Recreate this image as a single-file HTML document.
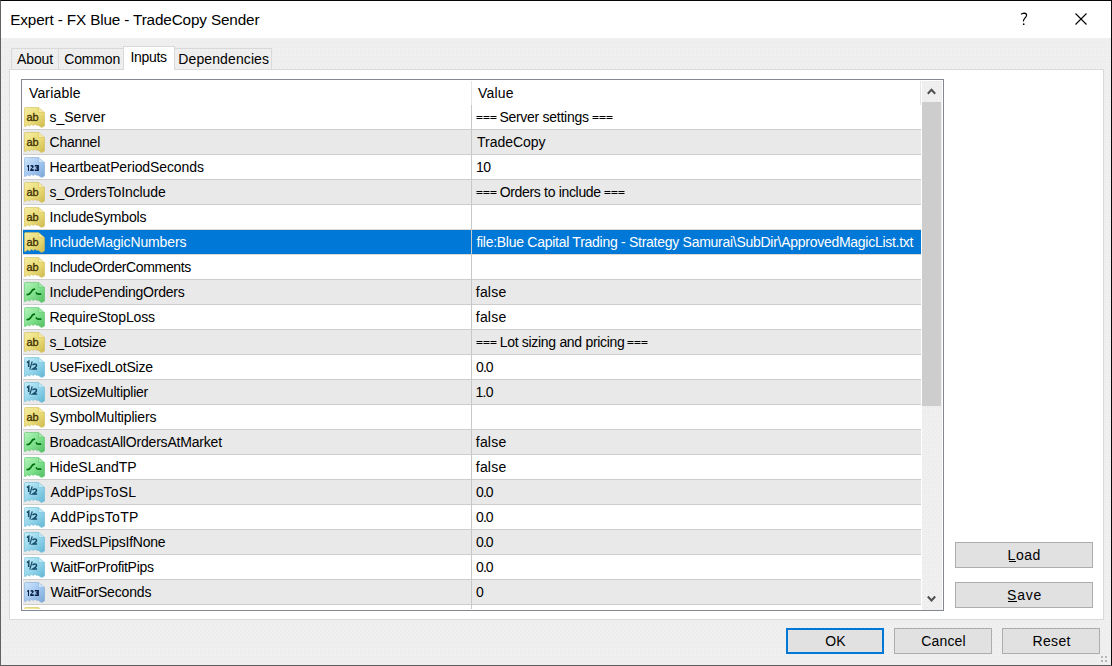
<!DOCTYPE html>
<html><head><meta charset="utf-8">
<style>
*{margin:0;padding:0;box-sizing:border-box}
html,body{width:1112px;height:666px;overflow:hidden;background:#f0f0f0;font-family:"Liberation Sans",sans-serif;color:#000}
div,svg{position:absolute}
.t{white-space:nowrap;line-height:16px}
.btn{background:#e1e1e1;border:1px solid #adadad}
</style></head><body>
<div style="left:0;top:0;width:1112px;height:666px;border-style:solid;border-width:1px;border-color:#050505 #0a0a0a #5c5c5c #626262"></div>
<svg style="left:0;top:0" width="1112" height="666"><defs><pattern id="dots" x="0" y="0" width="4" height="10" patternUnits="userSpaceOnUse"><rect x="0" y="1" width="1" height="1" fill="#e7e7e7"/><rect x="2" y="2" width="1" height="1" fill="#e7e7e7"/><rect x="0" y="4" width="1" height="1" fill="#e7e7e7"/><rect x="1" y="6" width="1" height="1" fill="#e7e7e7"/><rect x="3" y="7" width="1" height="1" fill="#e7e7e7"/><rect x="1" y="9" width="1" height="1" fill="#e7e7e7"/></pattern></defs><rect x="1" y="38" width="1110" height="627" fill="url(#dots)" shape-rendering="crispEdges"/></svg>
<div style="left:1px;top:1px;width:1110px;height:37px;background:#fff"></div>

<svg width="0" height="0" style="left:0;top:0"><defs><linearGradient id="gab" x1="0" y1="0" x2="1" y2="1"><stop offset="0" stop-color="#f5eca2"/><stop offset="0.55" stop-color="#ebdc76"/><stop offset="1" stop-color="#cdb94e"/></linearGradient><linearGradient id="gn" x1="0" y1="0" x2="1" y2="1"><stop offset="0" stop-color="#cfe4fb"/><stop offset="0.55" stop-color="#9fc5ef"/><stop offset="1" stop-color="#7aa6d6"/></linearGradient><linearGradient id="gb" x1="0" y1="0" x2="1" y2="1"><stop offset="0" stop-color="#b4f4bb"/><stop offset="0.55" stop-color="#7ddf8a"/><stop offset="1" stop-color="#52bd62"/></linearGradient><linearGradient id="gh" x1="0" y1="0" x2="1" y2="1"><stop offset="0" stop-color="#c6eef9"/><stop offset="0.55" stop-color="#8fd3ea"/><stop offset="1" stop-color="#62b5d2"/></linearGradient></defs></svg>
<div class="t" style="left:10.3px;top:12px;font-size:15.3px;letter-spacing:-0.147px">Expert - FX Blue - TradeCopy Sender</div>
<svg style="left:1019px;top:12px" width="10" height="15" viewBox="0 0 10 15"><path d="M2.1,2.4 Q3,1.1 5.2,1.1 Q7.6,1.2 7.6,3.2 Q7.5,4.8 5.7,6.3 Q4.4,7.5 4.4,9.5" fill="none" stroke="#000" stroke-width="1.15"/><circle cx="4.7" cy="12.2" r="0.85" fill="#000"/></svg>
<svg style="left:1075px;top:13px" width="12" height="12" viewBox="0 0 12 12"><path d="M0.5,0.5 L11.5,11.5 M11.5,0.5 L0.5,11.5" stroke="#000" stroke-width="1.1"/></svg>
<div style="left:9px;top:69px;width:1095px;height:551px;background:#fff;border:1px solid #d9d9d9"></div>
<div style="left:11px;top:48px;width:48px;height:21px;border:1px solid #d9d9d9;border-bottom:none"></div>
<div class="t" style="left:17px;top:51px;font-size:14px;letter-spacing:-0.1px">About</div>
<div style="left:58px;top:48px;width:66px;height:21px;border:1px solid #d9d9d9;border-bottom:none"></div>
<div class="t" style="left:64.2px;top:51px;font-size:14px;letter-spacing:-0.16px">Common</div>
<div style="left:123px;top:46px;width:52px;height:24px;background:#fff;border:1px solid #d9d9d9;border-bottom:none"></div>
<div class="t" style="left:130.6px;top:49px;font-size:14px;letter-spacing:-0.36px">Inputs</div>
<div style="left:174px;top:48px;width:98px;height:21px;border:1px solid #d9d9d9;border-bottom:none"></div>
<div class="t" style="left:178.3px;top:51px;font-size:14px;letter-spacing:0.108px">Dependencies</div>
<div style="left:21px;top:79px;width:923px;height:532px;border:1px solid #828790;background:#fff"></div>
<div class="t" style="left:28.9px;top:85px;font-size:14px;letter-spacing:0.199px">Variable</div>
<div class="t" style="left:477.9px;top:85px;font-size:14px;letter-spacing:0.2px">Value</div>
<div style="left:471px;top:81px;width:1px;height:24px;background:#e5e5e5"></div>
<div style="left:920px;top:81px;width:1px;height:24px;background:#e5e5e5"></div>
<div style="left:22px;top:80px;width:921px;height:529px;overflow:hidden">
<div style="left:1px;top:25px;width:898px;height:24px;background:#fff"></div>
<div style="left:1px;top:49px;width:898px;height:1px;background:#cdcdcd"></div>
<div style="left:449px;top:25px;width:1px;height:25px;background:#c8c8c8"></div>
<svg style="left:2px;top:27px" width="21" height="21" viewBox="0 0 21 21"><path d="M0.5,1.5 Q0.5,0.5 1.5,0.5 L14.5,0.5 L20.5,5.5 L20.5,19 L19,19.8 L17.5,20.6 L16,19.5 L14,18 L12.5,18.4 L11,16.9 L9.5,18.6 L7.5,17.3 L5.5,19 L3.5,17.7 L2,19.3 L0.5,19.4 Z" fill="url(#gab)" stroke="#cdb94e" stroke-width="1" stroke-opacity="0.55"/><path d="M14.5,0.8 L14.5,5.5 L20.2,5.5" fill="#f8f0b8" fill-opacity="0.7" stroke="#cdb94e" stroke-width="0.8" stroke-opacity="0.5"/><text x="2.6" y="13.9" font-family="Liberation Sans" font-size="11" fill="#3e3000" stroke="#3e3000" stroke-width="0.3" letter-spacing="-0.15">ab</text></svg>
<div style="left:1px;top:50px;width:898px;height:24px;background:#e9e9e9"></div>
<div style="left:1px;top:74px;width:898px;height:1px;background:#cdcdcd"></div>
<div style="left:449px;top:50px;width:1px;height:25px;background:#c8c8c8"></div>
<svg style="left:2px;top:52px" width="21" height="21" viewBox="0 0 21 21"><path d="M0.5,1.5 Q0.5,0.5 1.5,0.5 L14.5,0.5 L20.5,5.5 L20.5,19 L19,19.8 L17.5,20.6 L16,19.5 L14,18 L12.5,18.4 L11,16.9 L9.5,18.6 L7.5,17.3 L5.5,19 L3.5,17.7 L2,19.3 L0.5,19.4 Z" fill="url(#gab)" stroke="#cdb94e" stroke-width="1" stroke-opacity="0.55"/><path d="M14.5,0.8 L14.5,5.5 L20.2,5.5" fill="#f8f0b8" fill-opacity="0.7" stroke="#cdb94e" stroke-width="0.8" stroke-opacity="0.5"/><text x="2.6" y="13.9" font-family="Liberation Sans" font-size="11" fill="#3e3000" stroke="#3e3000" stroke-width="0.3" letter-spacing="-0.15">ab</text></svg>
<div style="left:1px;top:75px;width:898px;height:24px;background:#fff"></div>
<div style="left:1px;top:99px;width:898px;height:1px;background:#cdcdcd"></div>
<div style="left:449px;top:75px;width:1px;height:25px;background:#c8c8c8"></div>
<svg style="left:2px;top:77px" width="21" height="21" viewBox="0 0 21 21"><path d="M0.5,1.5 Q0.5,0.5 1.5,0.5 L14.5,0.5 L20.5,5.5 L20.5,19 L19,19.8 L17.5,20.6 L16,19.5 L14,18 L12.5,18.4 L11,16.9 L9.5,18.6 L7.5,17.3 L5.5,19 L3.5,17.7 L2,19.3 L0.5,19.4 Z" fill="url(#gn)" stroke="#7aa6d6" stroke-width="1" stroke-opacity="0.55"/><path d="M14.5,0.8 L14.5,5.5 L20.2,5.5" fill="#e2effc" fill-opacity="0.7" stroke="#7aa6d6" stroke-width="0.8" stroke-opacity="0.5"/><path d="M3,9 L4,8 L5,8 L5,14 L4,14 L4,9.5 L3,10 Z" fill="#0a1f45"/><path d="M6.3,8.8 Q7,8 8,8 Q9.7,8 9.7,9.6 Q9.7,10.6 8.5,11.3 L7.6,12.3 L9.8,12.3 L9.8,14 L6.2,14 L6.2,12.6 L8,10.6 Q8.3,10 8,9.6 Q7.6,9.4 7.1,10 Z" fill="#0a1f45"/><path d="M10.8,8 L14.9,8 L14.9,14 L10.8,14 L10.8,12.5 L13.2,12.5 L13.2,11.6 L11.8,11.6 L11.8,10.3 L13.2,10.3 L13.2,9.5 L10.8,9.5 Z" fill="#0a1f45"/></svg>
<div style="left:1px;top:100px;width:898px;height:24px;background:#e9e9e9"></div>
<div style="left:1px;top:124px;width:898px;height:1px;background:#cdcdcd"></div>
<div style="left:449px;top:100px;width:1px;height:25px;background:#c8c8c8"></div>
<svg style="left:2px;top:102px" width="21" height="21" viewBox="0 0 21 21"><path d="M0.5,1.5 Q0.5,0.5 1.5,0.5 L14.5,0.5 L20.5,5.5 L20.5,19 L19,19.8 L17.5,20.6 L16,19.5 L14,18 L12.5,18.4 L11,16.9 L9.5,18.6 L7.5,17.3 L5.5,19 L3.5,17.7 L2,19.3 L0.5,19.4 Z" fill="url(#gab)" stroke="#cdb94e" stroke-width="1" stroke-opacity="0.55"/><path d="M14.5,0.8 L14.5,5.5 L20.2,5.5" fill="#f8f0b8" fill-opacity="0.7" stroke="#cdb94e" stroke-width="0.8" stroke-opacity="0.5"/><text x="2.6" y="13.9" font-family="Liberation Sans" font-size="11" fill="#3e3000" stroke="#3e3000" stroke-width="0.3" letter-spacing="-0.15">ab</text></svg>
<div style="left:1px;top:125px;width:898px;height:24px;background:#fff"></div>
<div style="left:1px;top:149px;width:898px;height:1px;background:#e0d9d2"></div>
<div style="left:449px;top:125px;width:1px;height:25px;background:#c8c8c8"></div>
<svg style="left:2px;top:127px" width="21" height="21" viewBox="0 0 21 21"><path d="M0.5,1.5 Q0.5,0.5 1.5,0.5 L14.5,0.5 L20.5,5.5 L20.5,19 L19,19.8 L17.5,20.6 L16,19.5 L14,18 L12.5,18.4 L11,16.9 L9.5,18.6 L7.5,17.3 L5.5,19 L3.5,17.7 L2,19.3 L0.5,19.4 Z" fill="url(#gab)" stroke="#cdb94e" stroke-width="1" stroke-opacity="0.55"/><path d="M14.5,0.8 L14.5,5.5 L20.2,5.5" fill="#f8f0b8" fill-opacity="0.7" stroke="#cdb94e" stroke-width="0.8" stroke-opacity="0.5"/><text x="2.6" y="13.9" font-family="Liberation Sans" font-size="11" fill="#3e3000" stroke="#3e3000" stroke-width="0.3" letter-spacing="-0.15">ab</text></svg>
<div style="left:1px;top:150px;width:898px;height:24px;background:#0078d7"></div>
<div style="left:1px;top:174px;width:898px;height:1px;background:#e0d9d2"></div>
<div style="left:449px;top:150px;width:1px;height:25px;background:#c8c8c8"></div>
<svg style="left:2px;top:152px" width="21" height="21" viewBox="0 0 21 21"><path d="M0.5,1.5 Q0.5,0.5 1.5,0.5 L14.5,0.5 L20.5,5.5 L20.5,19 L19,19.8 L17.5,20.6 L16,19.5 L14,18 L12.5,18.4 L11,16.9 L9.5,18.6 L7.5,17.3 L5.5,19 L3.5,17.7 L2,19.3 L0.5,19.4 Z" fill="url(#gab)" stroke="#cdb94e" stroke-width="1" stroke-opacity="0.55"/><path d="M14.5,0.8 L14.5,5.5 L20.2,5.5" fill="#f8f0b8" fill-opacity="0.7" stroke="#cdb94e" stroke-width="0.8" stroke-opacity="0.5"/><text x="2.6" y="13.9" font-family="Liberation Sans" font-size="11" fill="#3e3000" stroke="#3e3000" stroke-width="0.3" letter-spacing="-0.15">ab</text></svg>
<div style="left:1px;top:175px;width:898px;height:24px;background:#fff"></div>
<div style="left:1px;top:199px;width:898px;height:1px;background:#cdcdcd"></div>
<div style="left:449px;top:175px;width:1px;height:25px;background:#c8c8c8"></div>
<svg style="left:2px;top:177px" width="21" height="21" viewBox="0 0 21 21"><path d="M0.5,1.5 Q0.5,0.5 1.5,0.5 L14.5,0.5 L20.5,5.5 L20.5,19 L19,19.8 L17.5,20.6 L16,19.5 L14,18 L12.5,18.4 L11,16.9 L9.5,18.6 L7.5,17.3 L5.5,19 L3.5,17.7 L2,19.3 L0.5,19.4 Z" fill="url(#gab)" stroke="#cdb94e" stroke-width="1" stroke-opacity="0.55"/><path d="M14.5,0.8 L14.5,5.5 L20.2,5.5" fill="#f8f0b8" fill-opacity="0.7" stroke="#cdb94e" stroke-width="0.8" stroke-opacity="0.5"/><text x="2.6" y="13.9" font-family="Liberation Sans" font-size="11" fill="#3e3000" stroke="#3e3000" stroke-width="0.3" letter-spacing="-0.15">ab</text></svg>
<div style="left:1px;top:200px;width:898px;height:24px;background:#e9e9e9"></div>
<div style="left:1px;top:224px;width:898px;height:1px;background:#cdcdcd"></div>
<div style="left:449px;top:200px;width:1px;height:25px;background:#c8c8c8"></div>
<svg style="left:2px;top:202px" width="21" height="21" viewBox="0 0 21 21"><path d="M0.5,1.5 Q0.5,0.5 1.5,0.5 L14.5,0.5 L20.5,5.5 L20.5,19 L19,19.8 L17.5,20.6 L16,19.5 L14,18 L12.5,18.4 L11,16.9 L9.5,18.6 L7.5,17.3 L5.5,19 L3.5,17.7 L2,19.3 L0.5,19.4 Z" fill="url(#gb)" stroke="#52bd62" stroke-width="1" stroke-opacity="0.55"/><path d="M14.5,0.8 L14.5,5.5 L20.2,5.5" fill="#a8eab0" fill-opacity="0.7" stroke="#52bd62" stroke-width="0.8" stroke-opacity="0.5"/><path d="M3.2,12.6 Q5.5,12.6 7,10.2 Q8.6,7.2 10.4,7.2" fill="none" stroke="#007010" stroke-width="1.7" stroke-linecap="round"/><path d="M12.3,10.9 Q13,12.2 14.2,12.2 L16.6,12.2" fill="none" stroke="#007010" stroke-width="1.7" stroke-linecap="round"/></svg>
<div style="left:1px;top:225px;width:898px;height:24px;background:#fff"></div>
<div style="left:1px;top:249px;width:898px;height:1px;background:#cdcdcd"></div>
<div style="left:449px;top:225px;width:1px;height:25px;background:#c8c8c8"></div>
<svg style="left:2px;top:227px" width="21" height="21" viewBox="0 0 21 21"><path d="M0.5,1.5 Q0.5,0.5 1.5,0.5 L14.5,0.5 L20.5,5.5 L20.5,19 L19,19.8 L17.5,20.6 L16,19.5 L14,18 L12.5,18.4 L11,16.9 L9.5,18.6 L7.5,17.3 L5.5,19 L3.5,17.7 L2,19.3 L0.5,19.4 Z" fill="url(#gb)" stroke="#52bd62" stroke-width="1" stroke-opacity="0.55"/><path d="M14.5,0.8 L14.5,5.5 L20.2,5.5" fill="#a8eab0" fill-opacity="0.7" stroke="#52bd62" stroke-width="0.8" stroke-opacity="0.5"/><path d="M3.2,12.6 Q5.5,12.6 7,10.2 Q8.6,7.2 10.4,7.2" fill="none" stroke="#007010" stroke-width="1.7" stroke-linecap="round"/><path d="M12.3,10.9 Q13,12.2 14.2,12.2 L16.6,12.2" fill="none" stroke="#007010" stroke-width="1.7" stroke-linecap="round"/></svg>
<div style="left:1px;top:250px;width:898px;height:24px;background:#e9e9e9"></div>
<div style="left:1px;top:274px;width:898px;height:1px;background:#cdcdcd"></div>
<div style="left:449px;top:250px;width:1px;height:25px;background:#c8c8c8"></div>
<svg style="left:2px;top:252px" width="21" height="21" viewBox="0 0 21 21"><path d="M0.5,1.5 Q0.5,0.5 1.5,0.5 L14.5,0.5 L20.5,5.5 L20.5,19 L19,19.8 L17.5,20.6 L16,19.5 L14,18 L12.5,18.4 L11,16.9 L9.5,18.6 L7.5,17.3 L5.5,19 L3.5,17.7 L2,19.3 L0.5,19.4 Z" fill="url(#gab)" stroke="#cdb94e" stroke-width="1" stroke-opacity="0.55"/><path d="M14.5,0.8 L14.5,5.5 L20.2,5.5" fill="#f8f0b8" fill-opacity="0.7" stroke="#cdb94e" stroke-width="0.8" stroke-opacity="0.5"/><text x="2.6" y="13.9" font-family="Liberation Sans" font-size="11" fill="#3e3000" stroke="#3e3000" stroke-width="0.3" letter-spacing="-0.15">ab</text></svg>
<div style="left:1px;top:275px;width:898px;height:24px;background:#fff"></div>
<div style="left:1px;top:299px;width:898px;height:1px;background:#cdcdcd"></div>
<div style="left:449px;top:275px;width:1px;height:25px;background:#c8c8c8"></div>
<svg style="left:2px;top:277px" width="21" height="21" viewBox="0 0 21 21"><path d="M0.5,1.5 Q0.5,0.5 1.5,0.5 L14.5,0.5 L20.5,5.5 L20.5,19 L19,19.8 L17.5,20.6 L16,19.5 L14,18 L12.5,18.4 L11,16.9 L9.5,18.6 L7.5,17.3 L5.5,19 L3.5,17.7 L2,19.3 L0.5,19.4 Z" fill="url(#gh)" stroke="#62b5d2" stroke-width="1" stroke-opacity="0.55"/><path d="M14.5,0.8 L14.5,5.5 L20.2,5.5" fill="#d2f1fa" fill-opacity="0.7" stroke="#62b5d2" stroke-width="0.8" stroke-opacity="0.5"/><path d="M2.9,5.6 L4.7,4.3 L4.7,10" fill="none" stroke="#174a68" stroke-width="1.6"/><path d="M8.2,4.3 L5.8,12.4" fill="none" stroke="#174a68" stroke-width="1.2"/><path d="M8.6,8.2 Q9,6.9 10.7,6.9 Q12.6,6.9 12.5,8.6 Q12.4,9.7 10.6,10.8 L8.9,11.9 L13.1,11.9" fill="none" stroke="#174a68" stroke-width="1.5"/></svg>
<div style="left:1px;top:300px;width:898px;height:24px;background:#e9e9e9"></div>
<div style="left:1px;top:324px;width:898px;height:1px;background:#cdcdcd"></div>
<div style="left:449px;top:300px;width:1px;height:25px;background:#c8c8c8"></div>
<svg style="left:2px;top:302px" width="21" height="21" viewBox="0 0 21 21"><path d="M0.5,1.5 Q0.5,0.5 1.5,0.5 L14.5,0.5 L20.5,5.5 L20.5,19 L19,19.8 L17.5,20.6 L16,19.5 L14,18 L12.5,18.4 L11,16.9 L9.5,18.6 L7.5,17.3 L5.5,19 L3.5,17.7 L2,19.3 L0.5,19.4 Z" fill="url(#gh)" stroke="#62b5d2" stroke-width="1" stroke-opacity="0.55"/><path d="M14.5,0.8 L14.5,5.5 L20.2,5.5" fill="#d2f1fa" fill-opacity="0.7" stroke="#62b5d2" stroke-width="0.8" stroke-opacity="0.5"/><path d="M2.9,5.6 L4.7,4.3 L4.7,10" fill="none" stroke="#174a68" stroke-width="1.6"/><path d="M8.2,4.3 L5.8,12.4" fill="none" stroke="#174a68" stroke-width="1.2"/><path d="M8.6,8.2 Q9,6.9 10.7,6.9 Q12.6,6.9 12.5,8.6 Q12.4,9.7 10.6,10.8 L8.9,11.9 L13.1,11.9" fill="none" stroke="#174a68" stroke-width="1.5"/></svg>
<div style="left:1px;top:325px;width:898px;height:24px;background:#fff"></div>
<div style="left:1px;top:349px;width:898px;height:1px;background:#cdcdcd"></div>
<div style="left:449px;top:325px;width:1px;height:25px;background:#c8c8c8"></div>
<svg style="left:2px;top:327px" width="21" height="21" viewBox="0 0 21 21"><path d="M0.5,1.5 Q0.5,0.5 1.5,0.5 L14.5,0.5 L20.5,5.5 L20.5,19 L19,19.8 L17.5,20.6 L16,19.5 L14,18 L12.5,18.4 L11,16.9 L9.5,18.6 L7.5,17.3 L5.5,19 L3.5,17.7 L2,19.3 L0.5,19.4 Z" fill="url(#gab)" stroke="#cdb94e" stroke-width="1" stroke-opacity="0.55"/><path d="M14.5,0.8 L14.5,5.5 L20.2,5.5" fill="#f8f0b8" fill-opacity="0.7" stroke="#cdb94e" stroke-width="0.8" stroke-opacity="0.5"/><text x="2.6" y="13.9" font-family="Liberation Sans" font-size="11" fill="#3e3000" stroke="#3e3000" stroke-width="0.3" letter-spacing="-0.15">ab</text></svg>
<div style="left:1px;top:350px;width:898px;height:24px;background:#e9e9e9"></div>
<div style="left:1px;top:374px;width:898px;height:1px;background:#cdcdcd"></div>
<div style="left:449px;top:350px;width:1px;height:25px;background:#c8c8c8"></div>
<svg style="left:2px;top:352px" width="21" height="21" viewBox="0 0 21 21"><path d="M0.5,1.5 Q0.5,0.5 1.5,0.5 L14.5,0.5 L20.5,5.5 L20.5,19 L19,19.8 L17.5,20.6 L16,19.5 L14,18 L12.5,18.4 L11,16.9 L9.5,18.6 L7.5,17.3 L5.5,19 L3.5,17.7 L2,19.3 L0.5,19.4 Z" fill="url(#gb)" stroke="#52bd62" stroke-width="1" stroke-opacity="0.55"/><path d="M14.5,0.8 L14.5,5.5 L20.2,5.5" fill="#a8eab0" fill-opacity="0.7" stroke="#52bd62" stroke-width="0.8" stroke-opacity="0.5"/><path d="M3.2,12.6 Q5.5,12.6 7,10.2 Q8.6,7.2 10.4,7.2" fill="none" stroke="#007010" stroke-width="1.7" stroke-linecap="round"/><path d="M12.3,10.9 Q13,12.2 14.2,12.2 L16.6,12.2" fill="none" stroke="#007010" stroke-width="1.7" stroke-linecap="round"/></svg>
<div style="left:1px;top:375px;width:898px;height:24px;background:#fff"></div>
<div style="left:1px;top:399px;width:898px;height:1px;background:#cdcdcd"></div>
<div style="left:449px;top:375px;width:1px;height:25px;background:#c8c8c8"></div>
<svg style="left:2px;top:377px" width="21" height="21" viewBox="0 0 21 21"><path d="M0.5,1.5 Q0.5,0.5 1.5,0.5 L14.5,0.5 L20.5,5.5 L20.5,19 L19,19.8 L17.5,20.6 L16,19.5 L14,18 L12.5,18.4 L11,16.9 L9.5,18.6 L7.5,17.3 L5.5,19 L3.5,17.7 L2,19.3 L0.5,19.4 Z" fill="url(#gb)" stroke="#52bd62" stroke-width="1" stroke-opacity="0.55"/><path d="M14.5,0.8 L14.5,5.5 L20.2,5.5" fill="#a8eab0" fill-opacity="0.7" stroke="#52bd62" stroke-width="0.8" stroke-opacity="0.5"/><path d="M3.2,12.6 Q5.5,12.6 7,10.2 Q8.6,7.2 10.4,7.2" fill="none" stroke="#007010" stroke-width="1.7" stroke-linecap="round"/><path d="M12.3,10.9 Q13,12.2 14.2,12.2 L16.6,12.2" fill="none" stroke="#007010" stroke-width="1.7" stroke-linecap="round"/></svg>
<div style="left:1px;top:400px;width:898px;height:24px;background:#e9e9e9"></div>
<div style="left:1px;top:424px;width:898px;height:1px;background:#cdcdcd"></div>
<div style="left:449px;top:400px;width:1px;height:25px;background:#c8c8c8"></div>
<svg style="left:2px;top:402px" width="21" height="21" viewBox="0 0 21 21"><path d="M0.5,1.5 Q0.5,0.5 1.5,0.5 L14.5,0.5 L20.5,5.5 L20.5,19 L19,19.8 L17.5,20.6 L16,19.5 L14,18 L12.5,18.4 L11,16.9 L9.5,18.6 L7.5,17.3 L5.5,19 L3.5,17.7 L2,19.3 L0.5,19.4 Z" fill="url(#gh)" stroke="#62b5d2" stroke-width="1" stroke-opacity="0.55"/><path d="M14.5,0.8 L14.5,5.5 L20.2,5.5" fill="#d2f1fa" fill-opacity="0.7" stroke="#62b5d2" stroke-width="0.8" stroke-opacity="0.5"/><path d="M2.9,5.6 L4.7,4.3 L4.7,10" fill="none" stroke="#174a68" stroke-width="1.6"/><path d="M8.2,4.3 L5.8,12.4" fill="none" stroke="#174a68" stroke-width="1.2"/><path d="M8.6,8.2 Q9,6.9 10.7,6.9 Q12.6,6.9 12.5,8.6 Q12.4,9.7 10.6,10.8 L8.9,11.9 L13.1,11.9" fill="none" stroke="#174a68" stroke-width="1.5"/></svg>
<div style="left:1px;top:425px;width:898px;height:24px;background:#fff"></div>
<div style="left:1px;top:449px;width:898px;height:1px;background:#cdcdcd"></div>
<div style="left:449px;top:425px;width:1px;height:25px;background:#c8c8c8"></div>
<svg style="left:2px;top:427px" width="21" height="21" viewBox="0 0 21 21"><path d="M0.5,1.5 Q0.5,0.5 1.5,0.5 L14.5,0.5 L20.5,5.5 L20.5,19 L19,19.8 L17.5,20.6 L16,19.5 L14,18 L12.5,18.4 L11,16.9 L9.5,18.6 L7.5,17.3 L5.5,19 L3.5,17.7 L2,19.3 L0.5,19.4 Z" fill="url(#gh)" stroke="#62b5d2" stroke-width="1" stroke-opacity="0.55"/><path d="M14.5,0.8 L14.5,5.5 L20.2,5.5" fill="#d2f1fa" fill-opacity="0.7" stroke="#62b5d2" stroke-width="0.8" stroke-opacity="0.5"/><path d="M2.9,5.6 L4.7,4.3 L4.7,10" fill="none" stroke="#174a68" stroke-width="1.6"/><path d="M8.2,4.3 L5.8,12.4" fill="none" stroke="#174a68" stroke-width="1.2"/><path d="M8.6,8.2 Q9,6.9 10.7,6.9 Q12.6,6.9 12.5,8.6 Q12.4,9.7 10.6,10.8 L8.9,11.9 L13.1,11.9" fill="none" stroke="#174a68" stroke-width="1.5"/></svg>
<div style="left:1px;top:450px;width:898px;height:24px;background:#e9e9e9"></div>
<div style="left:1px;top:474px;width:898px;height:1px;background:#cdcdcd"></div>
<div style="left:449px;top:450px;width:1px;height:25px;background:#c8c8c8"></div>
<svg style="left:2px;top:452px" width="21" height="21" viewBox="0 0 21 21"><path d="M0.5,1.5 Q0.5,0.5 1.5,0.5 L14.5,0.5 L20.5,5.5 L20.5,19 L19,19.8 L17.5,20.6 L16,19.5 L14,18 L12.5,18.4 L11,16.9 L9.5,18.6 L7.5,17.3 L5.5,19 L3.5,17.7 L2,19.3 L0.5,19.4 Z" fill="url(#gh)" stroke="#62b5d2" stroke-width="1" stroke-opacity="0.55"/><path d="M14.5,0.8 L14.5,5.5 L20.2,5.5" fill="#d2f1fa" fill-opacity="0.7" stroke="#62b5d2" stroke-width="0.8" stroke-opacity="0.5"/><path d="M2.9,5.6 L4.7,4.3 L4.7,10" fill="none" stroke="#174a68" stroke-width="1.6"/><path d="M8.2,4.3 L5.8,12.4" fill="none" stroke="#174a68" stroke-width="1.2"/><path d="M8.6,8.2 Q9,6.9 10.7,6.9 Q12.6,6.9 12.5,8.6 Q12.4,9.7 10.6,10.8 L8.9,11.9 L13.1,11.9" fill="none" stroke="#174a68" stroke-width="1.5"/></svg>
<div style="left:1px;top:475px;width:898px;height:24px;background:#fff"></div>
<div style="left:1px;top:499px;width:898px;height:1px;background:#cdcdcd"></div>
<div style="left:449px;top:475px;width:1px;height:25px;background:#c8c8c8"></div>
<svg style="left:2px;top:477px" width="21" height="21" viewBox="0 0 21 21"><path d="M0.5,1.5 Q0.5,0.5 1.5,0.5 L14.5,0.5 L20.5,5.5 L20.5,19 L19,19.8 L17.5,20.6 L16,19.5 L14,18 L12.5,18.4 L11,16.9 L9.5,18.6 L7.5,17.3 L5.5,19 L3.5,17.7 L2,19.3 L0.5,19.4 Z" fill="url(#gh)" stroke="#62b5d2" stroke-width="1" stroke-opacity="0.55"/><path d="M14.5,0.8 L14.5,5.5 L20.2,5.5" fill="#d2f1fa" fill-opacity="0.7" stroke="#62b5d2" stroke-width="0.8" stroke-opacity="0.5"/><path d="M2.9,5.6 L4.7,4.3 L4.7,10" fill="none" stroke="#174a68" stroke-width="1.6"/><path d="M8.2,4.3 L5.8,12.4" fill="none" stroke="#174a68" stroke-width="1.2"/><path d="M8.6,8.2 Q9,6.9 10.7,6.9 Q12.6,6.9 12.5,8.6 Q12.4,9.7 10.6,10.8 L8.9,11.9 L13.1,11.9" fill="none" stroke="#174a68" stroke-width="1.5"/></svg>
<div style="left:1px;top:500px;width:898px;height:24px;background:#e9e9e9"></div>
<div style="left:1px;top:524px;width:898px;height:1px;background:#cdcdcd"></div>
<div style="left:449px;top:500px;width:1px;height:25px;background:#c8c8c8"></div>
<svg style="left:2px;top:502px" width="21" height="21" viewBox="0 0 21 21"><path d="M0.5,1.5 Q0.5,0.5 1.5,0.5 L14.5,0.5 L20.5,5.5 L20.5,19 L19,19.8 L17.5,20.6 L16,19.5 L14,18 L12.5,18.4 L11,16.9 L9.5,18.6 L7.5,17.3 L5.5,19 L3.5,17.7 L2,19.3 L0.5,19.4 Z" fill="url(#gn)" stroke="#7aa6d6" stroke-width="1" stroke-opacity="0.55"/><path d="M14.5,0.8 L14.5,5.5 L20.2,5.5" fill="#e2effc" fill-opacity="0.7" stroke="#7aa6d6" stroke-width="0.8" stroke-opacity="0.5"/><path d="M3,9 L4,8 L5,8 L5,14 L4,14 L4,9.5 L3,10 Z" fill="#0a1f45"/><path d="M6.3,8.8 Q7,8 8,8 Q9.7,8 9.7,9.6 Q9.7,10.6 8.5,11.3 L7.6,12.3 L9.8,12.3 L9.8,14 L6.2,14 L6.2,12.6 L8,10.6 Q8.3,10 8,9.6 Q7.6,9.4 7.1,10 Z" fill="#0a1f45"/><path d="M10.8,8 L14.9,8 L14.9,14 L10.8,14 L10.8,12.5 L13.2,12.5 L13.2,11.6 L11.8,11.6 L11.8,10.3 L13.2,10.3 L13.2,9.5 L10.8,9.5 Z" fill="#0a1f45"/></svg>
<div style="left:1px;top:525px;width:898px;height:24px;background:#fff"></div>
<div style="left:1px;top:549px;width:898px;height:1px;background:#cdcdcd"></div>
<div style="left:449px;top:525px;width:1px;height:25px;background:#c8c8c8"></div>
<svg style="left:2px;top:527px" width="21" height="21" viewBox="0 0 21 21"><path d="M0.5,1.5 Q0.5,0.5 1.5,0.5 L14.5,0.5 L20.5,5.5 L20.5,19 L19,19.8 L17.5,20.6 L16,19.5 L14,18 L12.5,18.4 L11,16.9 L9.5,18.6 L7.5,17.3 L5.5,19 L3.5,17.7 L2,19.3 L0.5,19.4 Z" fill="url(#gab)" stroke="#cdb94e" stroke-width="1" stroke-opacity="0.55"/><path d="M14.5,0.8 L14.5,5.5 L20.2,5.5" fill="#f8f0b8" fill-opacity="0.7" stroke="#cdb94e" stroke-width="0.8" stroke-opacity="0.5"/><text x="2.6" y="13.9" font-family="Liberation Sans" font-size="11" fill="#3e3000" stroke="#3e3000" stroke-width="0.3" letter-spacing="-0.15">ab</text></svg>
</div>
<div class="t" style="left:49.5px;top:109px;font-size:14px;letter-spacing:0.0px">s_Server</div>
<div class="t" style="left:499.4px;top:109px;font-size:14px;letter-spacing:-0.27px">Server settings</div>
<svg style="left:0;top:0" width="1112" height="666"><path d="M476.5,116.5 h6 M476.5,118.5 h6 M483.5,116.5 h6 M483.5,118.5 h6 M490.5,116.5 h6 M490.5,118.5 h6 M592.5,116.5 h6 M592.5,118.5 h6 M599.5,116.5 h6 M599.5,118.5 h6 M606.5,116.5 h6 M606.5,118.5 h6 " stroke="#000" stroke-width="1"/></svg>
<div class="t" style="left:49.5px;top:134px;font-size:14px;letter-spacing:-0.232px">Channel</div>
<div class="t" style="left:477.1px;top:134px;font-size:14px;letter-spacing:-0.028px">TradeCopy</div>
<div class="t" style="left:49.5px;top:159px;font-size:14px;letter-spacing:-0.095px">HeartbeatPeriodSeconds</div>
<div class="t" style="left:476px;top:159px;font-size:14px;letter-spacing:-0.6px">10</div>
<div class="t" style="left:49.5px;top:184px;font-size:14px;letter-spacing:-0.073px">s_OrdersToInclude</div>
<div class="t" style="left:499.7px;top:184px;font-size:14px;letter-spacing:-0.325px">Orders to include</div>
<svg style="left:0;top:0" width="1112" height="666"><path d="M476.5,191.5 h6 M476.5,193.5 h6 M483.5,191.5 h6 M483.5,193.5 h6 M490.5,191.5 h6 M490.5,193.5 h6 M604.5,191.5 h6 M604.5,193.5 h6 M611.5,191.5 h6 M611.5,193.5 h6 M618.5,191.5 h6 M618.5,193.5 h6 " stroke="#000" stroke-width="1"/></svg>
<div class="t" style="left:49.5px;top:209px;font-size:14px;letter-spacing:-0.138px">IncludeSymbols</div>
<div class="t" style="left:49.5px;top:234px;font-size:14px;letter-spacing:-0.131px;color:#fff">IncludeMagicNumbers</div>
<div class="t" style="left:476.4px;top:234px;font-size:14px;letter-spacing:-0.274px;color:#fff">file:Blue Capital Trading - Strategy Samurai\SubDir\ApprovedMagicList.txt</div>
<div class="t" style="left:49.5px;top:259px;font-size:14px;letter-spacing:-0.359px">IncludeOrderComments</div>
<div class="t" style="left:49.5px;top:284px;font-size:14px;letter-spacing:-0.211px">IncludePendingOrders</div>
<div class="t" style="left:475.8px;top:284px;font-size:14px;letter-spacing:0.2px">false</div>
<div class="t" style="left:49.5px;top:309px;font-size:14px;letter-spacing:-0.127px">RequireStopLoss</div>
<div class="t" style="left:475.8px;top:309px;font-size:14px;letter-spacing:0.2px">false</div>
<div class="t" style="left:49.5px;top:334px;font-size:14px;letter-spacing:-0.275px">s_Lotsize</div>
<div class="t" style="left:499.7px;top:334px;font-size:14px;letter-spacing:-0.304px">Lot sizing and pricing</div>
<svg style="left:0;top:0" width="1112" height="666"><path d="M476.5,341.5 h6 M476.5,343.5 h6 M483.5,341.5 h6 M483.5,343.5 h6 M490.5,341.5 h6 M490.5,343.5 h6 M627.5,341.5 h6 M627.5,343.5 h6 M634.5,341.5 h6 M634.5,343.5 h6 M641.5,341.5 h6 M641.5,343.5 h6 " stroke="#000" stroke-width="1"/></svg>
<div class="t" style="left:49.5px;top:359px;font-size:14px;letter-spacing:-0.156px">UseFixedLotSize</div>
<div class="t" style="left:476.1px;top:359px;font-size:14px;letter-spacing:-1.0px">0.0</div>
<div class="t" style="left:49.5px;top:384px;font-size:14px;letter-spacing:-0.25px">LotSizeMultiplier</div>
<div class="t" style="left:475.5px;top:384px;font-size:14px;letter-spacing:-0.7px">1.0</div>
<div class="t" style="left:49.5px;top:409px;font-size:14px;letter-spacing:-0.176px">SymbolMultipliers</div>
<div class="t" style="left:49.5px;top:434px;font-size:14px;letter-spacing:-0.192px">BroadcastAllOrdersAtMarket</div>
<div class="t" style="left:475.8px;top:434px;font-size:14px;letter-spacing:0.2px">false</div>
<div class="t" style="left:49.5px;top:459px;font-size:14px;letter-spacing:0.0px">HideSLandTP</div>
<div class="t" style="left:475.8px;top:459px;font-size:14px;letter-spacing:0.2px">false</div>
<div class="t" style="left:50.5px;top:484px;font-size:14px;letter-spacing:0.14px">AddPipsToSL</div>
<div class="t" style="left:476.1px;top:484px;font-size:14px;letter-spacing:-1.0px">0.0</div>
<div class="t" style="left:50.5px;top:509px;font-size:14px;letter-spacing:0.3px">AddPipsToTP</div>
<div class="t" style="left:476.1px;top:509px;font-size:14px;letter-spacing:-1.0px">0.0</div>
<div class="t" style="left:49.5px;top:534px;font-size:14px;letter-spacing:-0.238px">FixedSLPipsIfNone</div>
<div class="t" style="left:476.1px;top:534px;font-size:14px;letter-spacing:-1.0px">0.0</div>
<div class="t" style="left:50.5px;top:559px;font-size:14px;letter-spacing:-0.312px">WaitForProfitPips</div>
<div class="t" style="left:476.1px;top:559px;font-size:14px;letter-spacing:-1.0px">0.0</div>
<div class="t" style="left:50.5px;top:584px;font-size:14px;letter-spacing:-0.154px">WaitForSeconds</div>
<div class="t" style="left:476.1px;top:584px;font-size:14px;letter-spacing:0px">0</div>
<div style="left:922px;top:81px;width:20px;height:529px;background:#f0f0f0"></div>
<svg style="left:0;top:0" width="1112" height="666"><rect x="922" y="81" width="20" height="529" fill="url(#dots)" shape-rendering="crispEdges"/></svg>
<div style="left:922px;top:102px;width:19px;height:304px;background:#cdcdcd"></div>
<svg style="left:922px;top:81px" width="20" height="20" viewBox="0 0 20 20"><path d="M5.8,12.8 L9.5,8.8 L13.2,12.8" fill="none" stroke="#505050" stroke-width="2"/></svg>
<svg style="left:922px;top:589px" width="20" height="20" viewBox="0 0 20 20"><path d="M5.8,7.5 L9.5,11.5 L13.2,7.5" fill="none" stroke="#505050" stroke-width="2"/></svg>
<div class="btn" style="left:955px;top:542px;width:138px;height:26px;"></div>
<div class="t" style="left:1007.6px;top:547px;font-size:14px;letter-spacing:0.532px">Load</div>
<div style="left:1009px;top:561px;width:7px;height:1px;background:#000"></div>
<div class="btn" style="left:955px;top:582px;width:138px;height:26px;"></div>
<div class="t" style="left:1007.1px;top:587px;font-size:14px;letter-spacing:0.799px">Save</div>
<div style="left:1008px;top:601px;width:9px;height:1px;background:#000"></div>
<div class="btn" style="left:786px;top:628px;width:98px;height:26px;border:2px solid #0078d7"></div>
<div class="t" style="left:825.3px;top:633px;font-size:14px;letter-spacing:0.0px">OK</div>
<div class="btn" style="left:894px;top:628px;width:98px;height:26px;"></div>
<div class="t" style="left:921.3px;top:633px;font-size:14px;letter-spacing:0.16px">Cancel</div>
<div class="btn" style="left:1002px;top:628px;width:98px;height:26px;"></div>
<div class="t" style="left:1032.6px;top:633px;font-size:14px;letter-spacing:0.3px">Reset</div>
<div style="left:1101px;top:656px;width:2px;height:2px;background:#b8b8b8"></div><div style="left:1105px;top:656px;width:2px;height:2px;background:#b8b8b8"></div><div style="left:1101px;top:660px;width:2px;height:2px;background:#b8b8b8"></div><div style="left:1105px;top:660px;width:2px;height:2px;background:#b8b8b8"></div>
</body></html>
